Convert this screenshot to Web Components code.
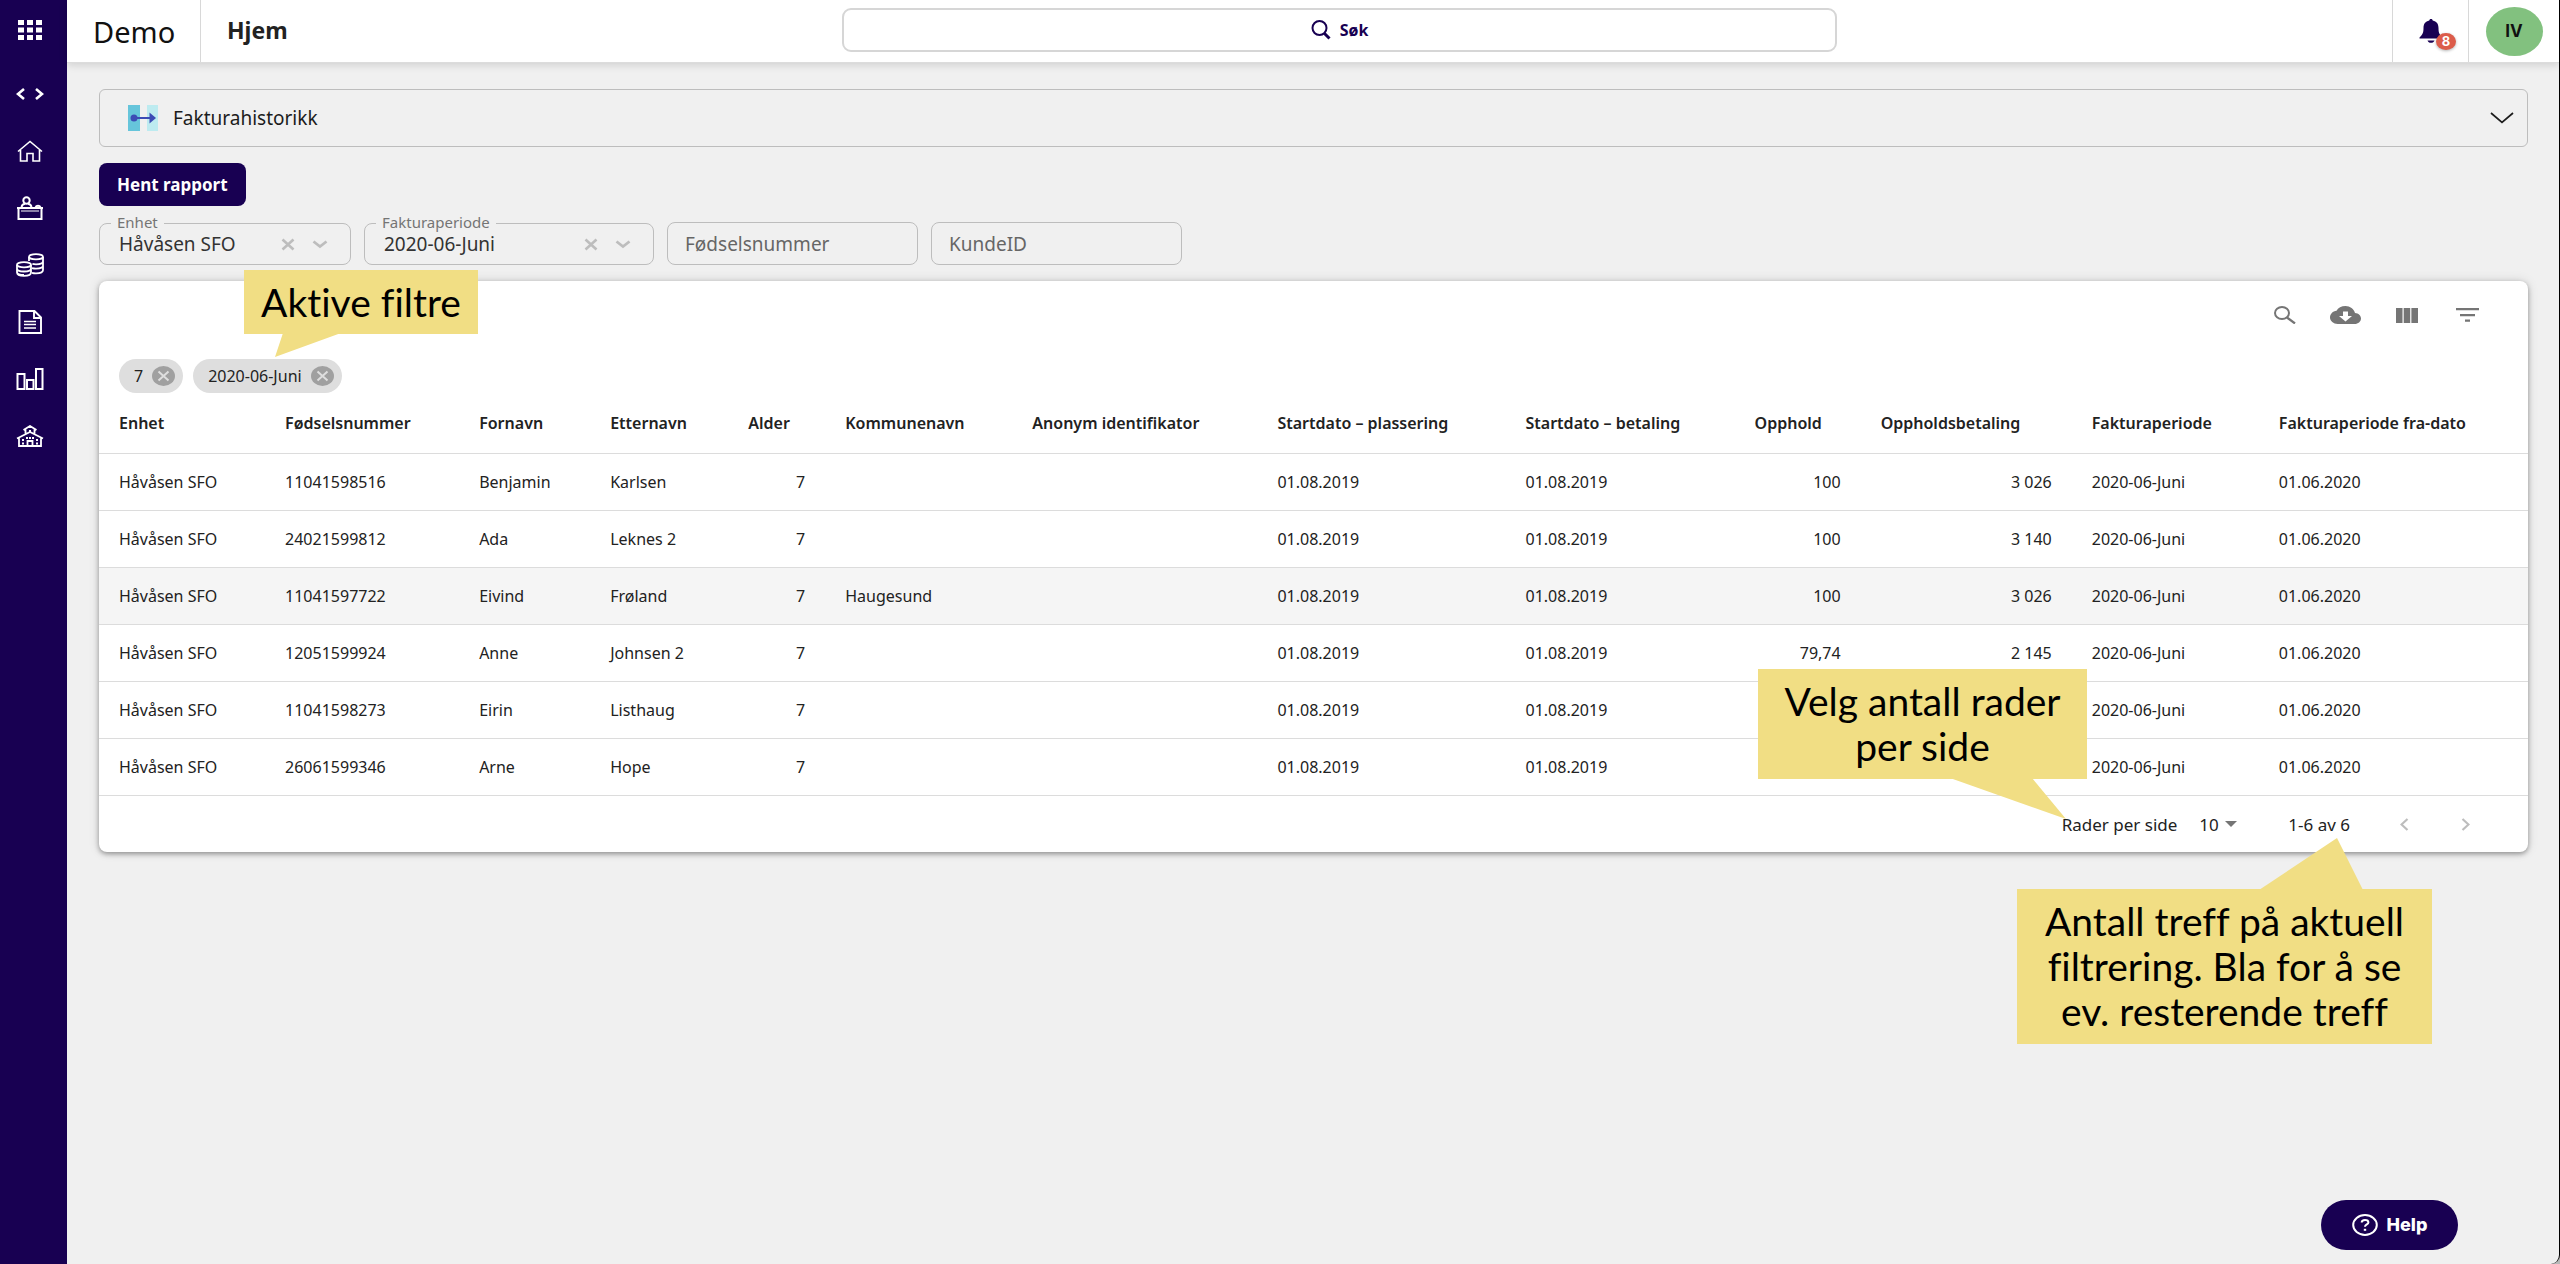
<!DOCTYPE html>
<html lang="no">
<head>
<meta charset="utf-8">
<title>Fakturahistorikk</title>
<style>
html,body{margin:0;height:100%}
body{font-family:"Noto Sans","Open Sans",sans-serif;font-size:17px;color:#222;background:#b8b8b8}
</style>
</head>
<body>
<app-shell></app-shell>
<script>
const BASE = `*{box-sizing:border-box}button{font:inherit;color:inherit;border:0;background:none;padding:0;margin:0;cursor:pointer}select,input{font:inherit;color:inherit;margin:0}`;

function define(name, render) {
  customElements.define(name, class extends HTMLElement {
    constructor() { super(); this.attachShadow({ mode: 'open' }); }
    connectedCallback() {
      const t = document.createElement('template');
      t.innerHTML = render(this);
      this.shadowRoot.replaceChildren(t.content.cloneNode(true));
    }
  });
}

/* Icon drawings: [width, height, markup] */
const ICONS = {
  apps: [24, 20, '<path fill="currentColor" d="M0 0h6v5H0zM9 0h6v5H9zM18 0h6v5h-6zM0 7.500h6v5H0zM9 7.500h6v5H9zM18 7.500h6v5h-6zM0 15h6v5H0zM9 15h6v5H9zM18 15h6v5h-6z"/>'],
  code: [28, 12, '<path d="M8 1 2 6l6 5M20 1l6 5-6 5" stroke-width="2.600"/>'],
  home: [26, 22, '<path d="M1 11.500 13 1.500l12 10M3.500 10v11H10v-7.500h6V21h6.500V10" stroke-width="1.600"/>'],
  desk: [28, 24, '<path d="M1 12h26M2.500 12.500V23h23V12.500" stroke-width="2"/><path d="M5 15h18" stroke-width="1"/><circle cx="10.500" cy="4.500" r="3.200" stroke-width="2"/><path d="M5.500 11c.5-2.500 2-3 3.500-3.200M15.500 11c-.5-2.500-2-3-3.500-3.200M19.500 11a2.800 2.300 0 0 1 5 0" stroke-width="2"/>'],
  coins: [28, 24, '<ellipse cx="20" cy="3.800" rx="7" ry="2.600"/><path d="M13 4v4M27 4v13c0 2-3 3.300-7 3.300-1.500 0-3-.2-4-.5M27 8.300c0 2-3 3-7 3-1.500 0-2.500-.1-3.600-.4M27 12.600c0 2-3 3-7 3-1.500 0-2.800-.2-4-.5"/><ellipse cx="8" cy="11.800" rx="7" ry="2.600"/><path d="M1 12v7.500c0 2 3 3.300 7 3.300s7-1.300 7-3.300V12M1 15.500c0 2 3 3 7 3s7-1 7-3M1 19c0 2 3 3 7 3"/>'],
  doc: [24, 24, '<path d="M1.500 1h15L23 7.500V23H1.500zM16 1v7h7" stroke-width="1.900"/><path d="M6 11.500h12M6 14.500h12M6 18h12" stroke-width="1.500"/>'],
  bars: [28, 22, '<path d="M1.500 6h7v15h-7zM11 12h6.500v9H11zM20 1h6.500v20H20z" stroke-width="2"/>'],
  school: [28, 22, '<path d="M1 13.500 14 7l13 6.500M3 13v8h22v-8M9.500 9V4.500M18.500 9V4.500M7.500 5 14 1l6.500 4M11.500 21v-5h5v5" stroke-width="1.800"/><path d="M13 5h2v2.500h-2zM6 14h2v2H6zM6 17.500h2v2H6zM20 14h2v2h-2zM20 17.500h2v2h-2zM10 12h2v2h-2zM13 12h2v2h-2zM16 12h2v2h-2z" fill="currentColor" stroke="none"/>'],
  find: [20, 20, '<circle cx="8.500" cy="8" r="7" stroke-width="2"/><path d="m13.500 13.500 5 5" stroke-width="3"/>'],
  bell: [24, 24, '<path fill="currentColor" d="M12 0c1 0 1.700.6 1.700 1.500 4 .8 5.800 3.600 5.800 7.500 0 5 1 6.800 4 9.500v1H.500v-1c3-2.700 4-4.500 4-9.500 0-3.900 1.800-6.700 5.800-7.500C10.300.6 11 0 12 0zM8.500 21.500h7c-.6 1.600-1.800 2.300-3.500 2.300s-2.900-.7-3.500-2.300z"/>'],
  transfer: [30, 26, '<path fill="#66c5db" d="M0 0h12v26H0z"/><path fill="#bdebf0" d="M19 0h11v26H19z"/><circle cx="6" cy="13" r="3.500" fill="#3c4bb5"/><path d="M6 13h18" stroke="#3c4bb5" stroke-width="2"/><path fill="#3c4bb5" d="m21.500 7.500 6.500 5.500-6.500 5.500z"/>'],
  down: [24, 12, '<path d="m1 1 11 9.500L23 1" stroke-width="1.700"/>'],
  clear: [14, 13, '<path d="m1.500 1.500 11 10M12.500 1.500l-11 10" stroke-width="2.600"/>'],
  chev: [16, 9, '<path d="m1.500 1.500 6.500 5 6.500-5" stroke-width="2.800"/>'],
  chipx: [23, 20, '<ellipse cx="11.500" cy="10" rx="11.500" ry="10" fill="#a0a0a0" stroke="none"/><path d="m6.500 5.500 10 9M16.500 5.500l-10 9" stroke="#dedede" stroke-width="2"/>'],
  search: [22, 18, '<ellipse cx="8" cy="7" rx="7" ry="6" stroke-width="2"/><path d="m13 11.500 8 6" stroke-width="2.200"/>'],
  cloud: [31, 18, '<path fill="currentColor" fill-rule="evenodd" d="M25 7C24 3 20 0 15.500 0 11.500 0 8 2 6.500 4.800 2.800 5.200 0 8 0 11.500 0 15 3.500 18 7.700 18h17C28 18 31 15.500 31 12.500 31 9.500 28.500 7.300 25 7zM22 10l-6.500 5.500L9 10h4V5.500h5V10z"/>'],
  columns: [22, 15, '<path fill="currentColor" d="M0 0h6.500v15H0zM7.700 0h6.500v15H7.700zM15.400 0H22v15h-6.600z"/>'],
  filter: [23, 14, '<path fill="currentColor" d="M0 0h23v2.300H0zM4 6h15v2.300H4zM9 11.500h5v2.300H9z"/>'],
  caret: [12, 6, '<path fill="currentColor" d="M0 0h12L6 6z"/>'],
  prev: [9, 13, '<path d="m7.500 1-6 5.500 6 5.500" stroke-width="2.200"/>'],
  next: [9, 13, '<path d="m1.500 1 6 5.500-6 5.500" stroke-width="2.200"/>'],
  help: [26, 22, '<ellipse cx="13" cy="11" rx="11.800" ry="9.900" stroke-width="2"/><path d="M9.700 8.500C9.700 6.800 11 6 13 6s3.400.9 3.400 2.400c0 2-3.400 2.100-3.400 4.400" stroke-width="2"/><path d="M11.800 14.800h2.400v2h-2.400z" fill="currentColor" stroke="none"/>']
};
define('ui-icon', el => {
  const [w, h, body] = ICONS[el.getAttribute('name')];
  const stroke = /^<path fill/.test(body) ? '' : 'stroke="currentColor" stroke-width="1.800"';
  return `<style>:host{display:inline-flex;flex:none}svg{display:block}</style>
  <svg width="${w}" height="${h}" viewBox="0 0 ${w} ${h}" fill="none" ${stroke} aria-hidden="true">${body}</svg>`;
});

define('side-nav', () => `<style>${BASE}
:host{display:block;width:67px;flex:none;background:#180052;color:#fff}
nav{display:flex;flex-direction:column;padding-right:8px}
a{display:flex;height:57px;align-items:center;justify-content:center;color:inherit}
a.apps{height:60px;margin-bottom:5px}
</style><nav>
<a class="apps" href="#" aria-label="Apper"><ui-icon name="apps"></ui-icon></a>
${['code','home','desk','coins','doc','bars','school'].map(n => `<a href="#${n}" aria-label="${n}"><ui-icon name="${n}"></ui-icon></a>`).join('')}
</nav>`);

define('top-bar', () => `<style>${BASE}
:host{display:grid;grid-template-columns:775fr 995px 722fr;height:63px;background:#fff;border-bottom:1px solid #dcdcdc;box-shadow:0 2px 8px rgba(0,0,0,.14);position:relative}
.left,.right{display:flex;align-items:stretch}
.right{justify-content:flex-end}
.brand{display:flex;align-items:center;padding:0 25px 0 26px;width:134px;font-size:29px;color:#111;border-right:1px solid #d8d8d8}
h1{margin:0;padding:0 0 2px 26px;display:flex;align-items:center;font-size:23px;font-weight:700}
.search{align-self:center;height:44px;margin-bottom:2px;border:2px solid #d6d6d6;border-radius:9px;background:#fff;color:#180052;font-weight:700;font-size:16px;display:flex;align-items:center;justify-content:center;gap:9px}
.cell{display:flex;align-items:center;justify-content:center;border-left:1px solid #d8d8d8;position:relative}
.bell{width:76px;color:#180052}
.badge{position:absolute;left:43px;top:33px;width:20px;height:17px;border-radius:50%;background:#dc5c4a;color:#fff;font:700 13px/17px Inter,sans-serif;text-align:center;box-shadow:0 1px 3px rgba(0,0,0,.3)}
.user{width:91px}
.avatar{width:57px;height:49px;border-radius:50%;background:#82c17f;color:#111;font:700 17px/49px Inter,sans-serif;text-align:center}
</style>
<div class="left"><div class="brand">Demo</div><h1>Hjem</h1></div>
<button class="search"><ui-icon name="find"></ui-icon>Søk</button>
<div class="right"><button class="cell bell" aria-label="Varsler"><ui-icon name="bell"></ui-icon><span class="badge">8</span></button>
<div class="cell user"><button class="avatar">IV</button></div></div>`);

define('report-accordion', () => `<style>${BASE}
:host{display:block}
button{width:100%;height:58px;border:1px solid #bdbdbd;border-radius:6px;display:flex;align-items:center;gap:15px;padding:0 13px 0 28px;font-size:19px;color:#1c1c1c;text-align:left}
span{flex:1}
</style><button aria-expanded="false"><ui-icon name="transfer"></ui-icon><span><slot></slot></span><ui-icon name="down"></ui-icon></button>`);

define('primary-button', () => `<style>${BASE}
:host{display:block}
button{height:43px;padding:0 18px;border-radius:8px;background:#180052;color:#fff;font-weight:700;font-size:17px}
</style><button><slot></slot></button>`);

define('filter-select', el => `<style>${BASE}
:host{display:block}
.box{position:relative;display:flex;align-items:center;gap:22px;height:42px;border:1px solid #bdbdbd;border-radius:8px;padding:0 22px 0 19px;color:#bdbdbd}
label{position:absolute;left:11px;top:-10px;padding:0 6px;background:#f0f0f0;color:#757575;font-size:15px;line-height:17px}
select{flex:1;min-width:0;height:40px;appearance:none;border:0;background:none;padding:0;font-size:19px;color:#333}
button{display:flex}
.box ui-icon{pointer-events:none}
.tail{margin-left:-5px}
</style><div class="box"><label for="s">${el.getAttribute('label')}</label>
<select id="s"><option>${el.getAttribute('value')}</option></select>
<button aria-label="Tøm"><ui-icon name="clear"></ui-icon></button><ui-icon class="tail" name="chev"></ui-icon></div>`);

define('filter-text', el => `<style>${BASE}
:host{display:block}
input{width:100%;height:43px;border:1px solid #bdbdbd;border-radius:8px;background:none;padding:0 17px;font-size:19px}
input::placeholder{color:#666;opacity:1}
</style><input type="text" aria-label="${el.getAttribute('label')}" placeholder="${el.getAttribute('label')}">`);

define('filter-chip', () => `<style>${BASE}
:host{display:flex;align-items:center;gap:9px;height:34px;border-radius:17px;background:#dedede;padding:0 8px 0 15px;font-size:16px}
button{display:flex}
</style><slot></slot><button aria-label="Fjern filter"><ui-icon name="chipx"></ui-icon></button>`);

const COLS = [['Enhet',166],['Fødselsnummer',194],['Fornavn',131],['Etternavn',138],['Alder',97],['Kommunenavn',187],['Anonym identifikator',245],['Startdato – plassering',248],['Startdato – betaling',229],['Opphold',126],['Oppholdsbetaling',211],['Fakturaperiode',187],['Fakturaperiode fra-dato',269]];
const ROWS = [
  ['11041598516','Benjamin','Karlsen','','100','3 026'],
  ['24021599812','Ada','Leknes 2','','100','3 140'],
  ['11041597722','Eivind','Frøland','Haugesund','100','3 026'],
  ['12051599924','Anne','Johnsen 2','','79,74','2 145'],
  ['11041598273','Eirin','Listhaug','','',''],
  ['26061599346','Arne','Hope','','','']
].map(([nr, first, last, kommune, opphold, betaling]) => ['Håvåsen SFO', nr, first, last, '7', kommune, '', '01.08.2019', '01.08.2019', opphold, betaling, '2020-06-Juni', '01.06.2020']);
const NUMERIC = [4, 9, 10];

define('invoice-table', () => `<style>${BASE}
:host{display:block;background:#fff;border-radius:8px;box-shadow:0 2px 5px rgba(0,0,0,.35),0 0 12px rgba(0,0,0,.12)}
.tools{display:flex;justify-content:flex-end;align-items:center;height:68px;gap:16px;padding-right:38px;color:#757575}
.tools button{width:45px;height:40px;display:flex;align-items:center;justify-content:center}
.chips{display:flex;gap:10px;padding:10px 20px 0}
table{width:100%;table-layout:fixed;border-collapse:separate;border-spacing:0}
th,td{padding:0 0 0 20px;text-align:left;white-space:nowrap;border-bottom:1px solid #dcdcdc;height:57px;font-size:16px;font-weight:400}
th{height:61px;font-weight:600}
td.n{text-align:right;padding-right:20px}
tr.hover td{background:#f5f5f5}
footer{display:flex;align-items:center;justify-content:flex-end;height:56px;padding-right:40px;font-size:17px}
label{margin-right:22px}
.pick{display:flex;align-items:center;color:#757575;margin-right:51px}
select{appearance:none;border:0;background:none;padding:0;width:26px;color:#222}
.count{margin-right:32px}
footer button{width:45px;height:40px;display:flex;align-items:center;justify-content:center;color:#bdbdbd}
footer button+button{margin-left:16px}
</style>
<div class="tools">${[['search','Søk i tabell'],['cloud','Last ned'],['columns','Vis kolonner'],['filter','Filtrer']].map(([n, l]) => `<button aria-label="${l}"><ui-icon name="${n}"></ui-icon></button>`).join('')}</div>
<div class="chips"><filter-chip>7</filter-chip><filter-chip>2020-06-Juni</filter-chip></div>
<table><colgroup>${COLS.map(c => `<col style="width:${c[1]}px">`).join('')}</colgroup>
<thead><tr>${COLS.map(c => `<th scope="col">${c[0]}</th>`).join('')}</tr></thead>
<tbody>${ROWS.map((r, i) => `<tr${i === 2 ? ' class="hover"' : ''}>${r.map((v, j) => `<td${NUMERIC.includes(j) ? ' class="n"' : ''}>${v}</td>`).join('')}</tr>`).join('')}</tbody></table>
<footer><label for="rows">Rader per side</label><div class="pick"><select id="rows"><option>10</option></select><ui-icon name="caret"></ui-icon></div>
<span class="count">1-6 av 6</span><button aria-label="Forrige side"><ui-icon name="prev"></ui-icon></button><button aria-label="Neste side"><ui-icon name="next"></ui-icon></button></footer>`);

define('call-out', el => `<style>${BASE}
:host{position:absolute;display:flex;align-items:center;justify-content:center;background:#f1de84;color:#000;font-family:Lato,sans-serif;font-size:39px;line-height:45px;text-align:center;font-variant-ligatures:none}
svg{position:absolute;left:0;top:0;width:1px;height:1px;overflow:visible}
div{position:relative;white-space:nowrap}
</style><svg aria-hidden="true"><polygon fill="#f1de84" points="${el.getAttribute('tail')}"/></svg><div><slot></slot></div>`);

define('help-button', () => `<style>${BASE}
:host{position:absolute;right:101px;bottom:14px}
button{width:137px;height:50px;border-radius:25px;background:#180052;color:#fff;display:flex;align-items:center;justify-content:center;gap:9px;font:800 18px/22px Inter,sans-serif}
</style><button><ui-icon name="help"></ui-icon>Help</button>`);

define('app-shell', () => `<style>${BASE}
:host{display:flex;box-sizing:border-box;min-height:100vh;position:relative;background:#f0f0f0;border-right:1px solid #000;border-bottom-right-radius:9px}
.page{flex:1;min-width:0;display:flex;flex-direction:column}
main{display:flex;flex-direction:column;gap:16px;padding:26px 31px 32px 32px}
primary-button{align-self:flex-start}
.filters{display:flex;align-items:flex-end;gap:13px}
.f1{width:252px}.f2{width:290px}.f3{width:251px}
.a{left:244px;top:270px;width:234px;height:64px}
.b{right:472px;top:669px;width:329px;height:110px}
.c{right:127px;top:889px;width:415px;height:155px}
</style>
<side-nav></side-nav>
<div class="page"><top-bar></top-bar>
<main>
<report-accordion>Fakturahistorikk</report-accordion>
<primary-button>Hent rapport</primary-button>
<div class="filters">
<filter-select class="f1" label="Enhet" value="Håvåsen SFO"></filter-select>
<filter-select class="f2" label="Fakturaperiode" value="2020-06-Juni"></filter-select>
<filter-text class="f3" label="Fødselsnummer"></filter-text>
<filter-text class="f3" label="KundeID"></filter-text>
</div>
<invoice-table></invoice-table>
</main></div>
<call-out class="a" tail="39,63 97,63 31,87">Aktive filtre</call-out>
<call-out class="b" tail="192,109 274,109 308,150">Velg antall rader<br>per side</call-out>
<call-out class="c" tail="242,1 346,1 320,-51">Antall treff på aktuell<br>filtrering. Bla for å se<br>ev. resterende treff</call-out>
<help-button></help-button>`);
</script>
</body>
</html>
